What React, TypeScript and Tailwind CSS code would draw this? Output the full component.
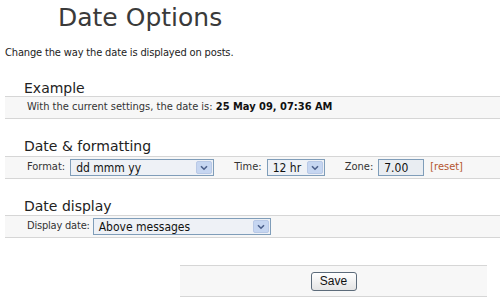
import React from "react";

const body = "font-['DejaVu_Sans_Condensed','Liberation_Sans',sans-serif]";
const head = "font-['DejaVu_Sans','Liberation_Sans',sans-serif]";

function Chevron() {
  return (
    <span className="flex h-[13px] w-[16px] items-center justify-center rounded-[2px] border border-[#b9c9e6] bg-[#c6d6f1]">
      <svg width="8" height="6" viewBox="0 0 8 6">
        <path d="M1 1.2 L4 4.2 L7 1.2" fill="none" stroke="#4b5f8a" strokeWidth="1.6" />
      </svg>
    </span>
  );
}

function FakeSelect({ value, width }: { value: string; width: string }) {
  return (
    <div className={`flex h-[17px] items-center justify-between border border-[#7f9db9] bg-[#eef1f6] pl-[5px] pr-[1px] ${width}`}>
      <span className="text-[12px] leading-none text-[#111]">{value}</span>
      <Chevron />
    </div>
  );
}

function Section({ title, mt, gap, children }: { title: string; mt: string; gap: string; children: React.ReactNode }) {
  return (
    <div className={mt}>
      <h2 className={`${head} h-[16px] pl-[19px] text-[14px] leading-[16px] text-[#222]`}>{title}</h2>
      <div className={`${gap} flex h-[23px] items-center gap-[5px] border-y border-[#d6d6d6] bg-[#f7f7f7] pl-[22px] text-[11px] text-[#333]`}>
        {children}
      </div>
    </div>
  );
}

export default function App() {
  return (
    <div className={`${body} h-[303px] w-[500px] overflow-hidden bg-white pl-[5px]`}>
      <h1 className={`${head} h-[36px] pl-[53px] text-[25px] leading-[36px] text-[#3a3a3a]`}>Date Options</h1>
      <p className="mt-[8px] text-[11px] leading-[18px] tracking-[-0.15px] text-[#222]">Change the way the date is displayed on posts.</p>

      <Section title="Example" mt="mt-[18px]" gap="mt-0">
        <span>
          With the current settings, the date is: <b className="text-[#111]">25 May 09, 07:36 AM</b>
        </span>
      </Section>

      <Section title="Date & formatting" mt="mt-[19px]" gap="mt-[2px]">
        <span>Format:</span>
        <FakeSelect value="dd mmm yy" width="w-[144px]" />
        <span className="ml-[15px]">Time:</span>
        <FakeSelect value="12 hr" width="w-[58px]" />
        <span className="ml-[15px]">Zone:</span>
        <div className="flex h-[17px] w-[46px] items-center border border-[#7f9db9] bg-[#e9edf2] pl-[5px] text-[12px] text-[#111]">7.00</div>
        <span className="ml-[1px] text-[#b4552e]">[reset]</span>
      </Section>

      <Section title="Date display" mt="mt-[19px]" gap="mt-[1px]">
        <span className="tracking-[-0.2px]">Display date:</span>
        <div className="-ml-[2px]">
          <FakeSelect value="Above messages" width="w-[178px]" />
        </div>
      </Section>

      <div className="ml-[175px] mt-[27px] flex h-[32px] w-[307px] items-center justify-center border-y border-[#d6d6d6] bg-[#f7f7f7]">
        <button className="h-[19px] w-[46px] rounded-[3px] border border-[#5c6b7a] bg-gradient-to-b from-white to-[#e4e4e4] font-['Liberation_Sans',sans-serif] text-[12px] leading-none text-[#111]">
          Save
        </button>
      </div>
    </div>
  );
}
